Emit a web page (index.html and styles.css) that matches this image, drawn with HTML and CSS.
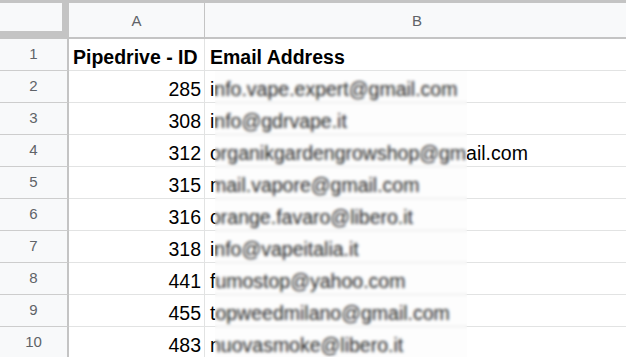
FILE: index.html
```html
<!DOCTYPE html>
<html>
<head>
<meta charset="utf-8">
<link rel="stylesheet" href="styles.css">
</head>
<body>
<div class="sheet">
  <div class="row head">
    <div class="corner"><div class="corner-fill"></div></div>
    <div class="colhead col-a">A</div>
    <div class="colhead col-b">B</div>
  </div>
  <div class="row">
    <div class="rowhead">1</div>
    <div class="cell col-a bold">Pipedrive - ID</div>
    <div class="cell col-b bold">Email Address</div>
  </div>
  <div class="row">
    <div class="rowhead">2</div>
    <div class="cell col-a num">285</div>
    <div class="cell col-b">info.vape.expert@gmail.com</div>
  </div>
  <div class="row">
    <div class="rowhead">3</div>
    <div class="cell col-a num">308</div>
    <div class="cell col-b">info@gdrvape.it</div>
  </div>
  <div class="row">
    <div class="rowhead">4</div>
    <div class="cell col-a num">312</div>
    <div class="cell col-b">organikgardengrowshop@gmail.com</div>
  </div>
  <div class="row">
    <div class="rowhead">5</div>
    <div class="cell col-a num">315</div>
    <div class="cell col-b">mail.vapore@gmail.com</div>
  </div>
  <div class="row">
    <div class="rowhead">6</div>
    <div class="cell col-a num">316</div>
    <div class="cell col-b">orange.favaro@libero.it</div>
  </div>
  <div class="row">
    <div class="rowhead">7</div>
    <div class="cell col-a num">318</div>
    <div class="cell col-b">info@vapeitalia.it</div>
  </div>
  <div class="row">
    <div class="rowhead">8</div>
    <div class="cell col-a num">441</div>
    <div class="cell col-b">fumostop@yahoo.com</div>
  </div>
  <div class="row">
    <div class="rowhead">9</div>
    <div class="cell col-a num">455</div>
    <div class="cell col-b">topweedmilano@gmail.com</div>
  </div>
  <div class="row">
    <div class="rowhead">10</div>
    <div class="cell col-a num">483</div>
    <div class="cell col-b">nuovasmoke@libero.it</div>
  </div>
  <div class="redact"></div>
</div>
</body>
</html>
```

FILE: styles.css
```css
html, body {
  margin: 0;
  padding: 0;
  background: #ffffff;
  overflow: hidden;
}

.sheet {
  position: relative;
  width: 626px;
  height: 357px;
  border-top: 3px solid #c4c4c4;
  box-sizing: border-box;
  font-family: "Liberation Sans", Arial, sans-serif;
}

.row {
  display: flex;
  height: 32px;
}

.row.head {
  height: 36px;
}

.corner {
  width: 69px;
  flex: none;
  background: #c4c4c4;
}

.corner-fill {
  width: 62px;
  height: 28px;
  background: #f8f9fa;
}

.colhead {
  box-sizing: border-box;
  height: 36px;
  background: #f8f9fa;
  border-bottom: 2px solid #c4c4c4;
  color: #5f6368;
  font-size: 15px;
  display: flex;
  align-items: center;
  justify-content: center;
  flex: none;
}

.colhead.col-a {
  border-right: 1px solid #c4c4c4;
}

.col-a {
  width: 136px;
}

.col-b {
  width: 424px;
}

.rowhead {
  box-sizing: border-box;
  width: 69px;
  flex: none;
  height: 32px;
  background: #f8f9fa;
  border-right: 2px solid #c4c4c4;
  border-bottom: 1px solid #cdcdcd;
  color: #5f6368;
  font-size: 15px;
  display: flex;
  align-items: center;
  justify-content: center;
  padding-bottom: 2px;
}

.cell {
  box-sizing: border-box;
  flex: none;
  height: 32px;
  border-bottom: 1px solid #e2e3e3;
  font-size: 19.5px;
  line-height: 22px;
  color: #000000;
  display: flex;
  align-items: flex-end;
  padding: 0 5px 2px 5px;
  white-space: nowrap;
  overflow: hidden;
}

.cell.col-a {
  border-right: 1px solid #e2e3e3;
}

.cell.bold {
  font-weight: bold;
  padding-left: 4px;
}

.cell.col-b.bold {
  padding-left: 5px;
}

.cell.num {
  justify-content: flex-end;
  padding-right: 3px;
}

.redact {
  position: absolute;
  left: 215px;
  top: 68px;
  width: 252px;
  height: 289px;
  backdrop-filter: blur(1.5px);
  background: rgba(240, 242, 244, 0.15);
}
```
